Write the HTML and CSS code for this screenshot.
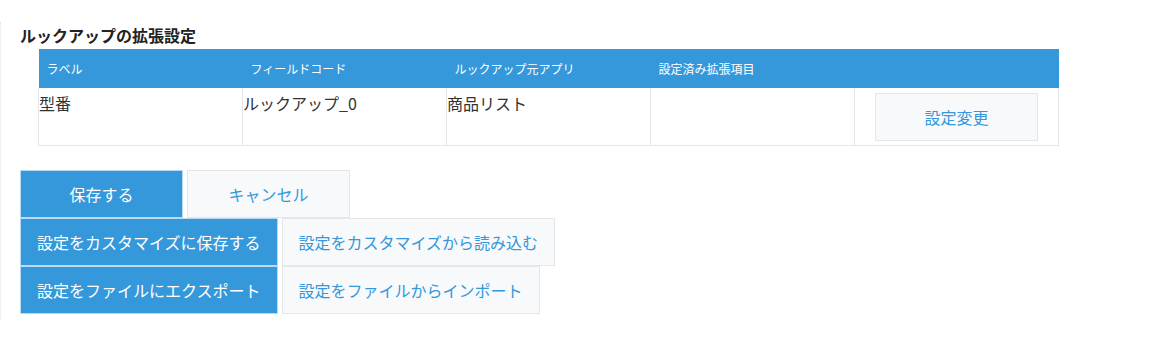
FILE: index.html
```html
<!DOCTYPE html>
<html lang="ja">
<head>
    <meta charset="UTF-8">
    <title>ルックアップの拡張設定</title>
    <link rel="stylesheet" href="styles.css">
</head>
<body>
    <div class="plugin-wrap">
        <h3 class="plugin-title">ルックアップの拡張設定</h3>
        <table class="plugin-table">
            <thead>
                <tr>
                    <th>ラベル</th>
                    <th>フィールドコード</th>
                    <th>ルックアップ元アプリ</th>
                    <th>設定済み拡張項目</th>
                    <th></th>
                </tr>
            </thead>
            <tbody>
                <tr>
                    <td>型番</td>
                    <td>ルックアップ_0</td>
                    <td>商品リスト</td>
                    <td></td>
                    <td class="cell-action"><button class="btn btn-cancel">設定変更</button></td>
                </tr>
            </tbody>
        </table>

        <div class="button-rows">
            <div class="button-row">
                <button class="btn btn-ok">保存する</button>
                <button class="btn btn-cancel">キャンセル</button>
            </div>
            <div class="button-row">
                <button class="btn btn-ok">設定をカスタマイズに保存する</button>
                <button class="btn btn-cancel">設定をカスタマイズから読み込む</button>
            </div>
            <div class="button-row">
                <button class="btn btn-ok">設定をファイルにエクスポート</button>
                <button class="btn btn-cancel">設定をファイルからインポート</button>
            </div>
        </div>
    </div>
</body>
</html>
```

FILE: styles.css
```css
body {
    margin: 0;
    padding: 0;
    background: #fff;
    color: #333;
    font-family: "Noto Sans CJK JP", "Noto Sans", sans-serif;
}

.plugin-wrap {
    margin-top: 22px;
    padding: 2px 0 6px 19px;
    border-left: 1px dotted #e4e4e4;
    min-height: 298px;
    box-sizing: border-box;
}

.plugin-title {
    margin: 0;
    font-size: 16px;
    font-weight: bold;
    line-height: 22px;
    color: #222;
}

/* テーブル */
.plugin-table {
    margin: 3px 0 0 18px;
    border-collapse: collapse;
    table-layout: fixed;
    width: 1021px;
}

.plugin-table th {
    background: #3498db;
    color: #fff;
    font-size: 12px;
    font-weight: normal;
    text-align: left;
    height: 39px;
    padding: 0 8px;
    border: none;
}

.plugin-table td {
    border: 1px solid #e3e7e8;
    border-top: none;
    height: 54px;
    padding: 3px 1px 0 0;
    vertical-align: top;
    font-size: 16px;
    line-height: 24px;
    color: #333;
}

.plugin-table td.cell-action {
    text-align: center;
    vertical-align: middle;
    padding: 0;
}

/* ボタン */
.button-rows {
    margin-top: 24px;
}

.button-row {
    display: flex;
    gap: 4px;
}

.btn {
    min-width: 163px;
    height: 48px;
    padding: 0 16px;
    border: 1px solid #e3e7e8;
    font-family: "Noto Sans CJK JP", "Noto Sans", sans-serif;
    font-size: 16px;
    cursor: pointer;
    box-sizing: border-box;
}

.btn-ok {
    background: #3498db;
    color: #fff;
    border-color: #b8daf2;
}

.btn-cancel {
    background: #f7f9fa;
    color: #3498db;
}
```
